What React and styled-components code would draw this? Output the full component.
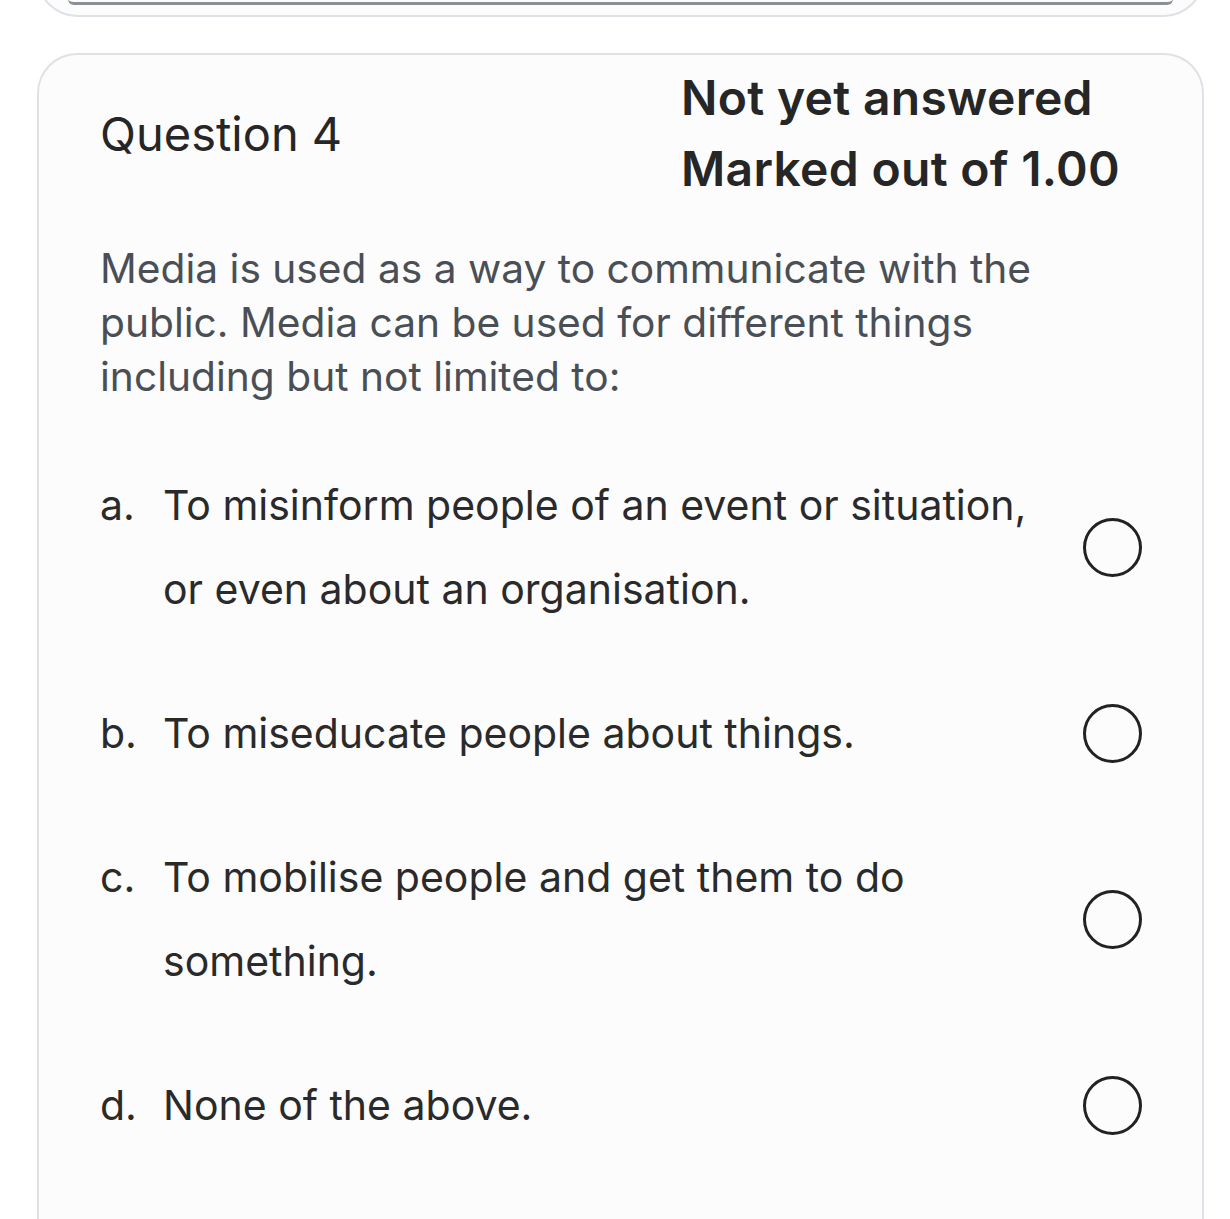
import React from "react";
import styled, { createGlobalStyle } from "styled-components";

const GlobalStyle = createGlobalStyle`
  html, body {
    margin: 0;
    padding: 0;
    background: #ffffff;
    font-family: Inter, "Noto Sans", "Liberation Sans", sans-serif;
    -webkit-font-smoothing: antialiased;
  }
  body {
    overflow: hidden;
  }
`;

const Page = styled.div`
  display: flex;
  flex-direction: column;
  gap: 36px;
  padding: 0 26px 0 37px;
  height: 1219px;
  overflow: hidden;
`;

const PrevCard = styled.div`
  margin-top: -59px;
  height: 74px;
  border: 2px solid #dee2e6;
  border-top: none;
  border-radius: 0 0 40px 40px;
  background: #fcfcfc;
  padding: 0 29px;
`;

const PrevBar = styled.div`
  height: 61px;
  border-bottom: 3px solid #8b8e94;
  border-radius: 0 0 6px 6px;
`;

const Card = styled.section`
  flex: 1;
  border: 2px solid #dee2e6;
  border-bottom: none;
  border-radius: 40px 40px 0 0;
  background: #fcfcfc;
  padding: 7px 60px 0 61px;
  color: #222222;
`;

const Header = styled.div`
  display: flex;
  align-items: center;
  justify-content: space-between;
`;

const QuestionTitle = styled.h2`
  margin: 0;
  font-size: 47px;
  font-weight: 400;
  color: #262626;
`;

const Info = styled.div`
  margin-right: 17px;
  width: 444px;
`;

const InfoLine = styled.div`
  font-size: 48px;
  font-weight: 600;
  line-height: 71px;
  letter-spacing: 0.3px;
  color: #262626;
  white-space: nowrap;
`;

const Prompt = styled.p`
  margin: 38px 0 0;
  font-size: 40.7px;
  line-height: 54px;
  color: #4a4f56;
  max-width: 960px;
`;

const Options = styled.div`
  display: flex;
  flex-direction: column;
  gap: 60px;
  margin-top: 59px;
`;

const Option = styled.label`
  display: flex;
  align-items: center;
`;

const Letter = styled.span`
  width: 63px;
  flex-shrink: 0;
  font-size: 41px;
  line-height: 84px;
  color: #2a2a2a;
  align-self: flex-start;
`;

const OptionText = styled.span`
  flex: 1;
  font-size: 41px;
  line-height: 84px;
  color: #2a2a2a;
  max-width: 880px;
`;

const Radio = styled.span`
  width: 53px;
  height: 53px;
  flex-shrink: 0;
  border: 3px solid #222;
  border-radius: 50%;
  margin-left: auto;
`;

const options = [
  { letter: "a.", text: "To misinform people of an event or situation, or even about an organisation." },
  { letter: "b.", text: "To miseducate people about things." },
  { letter: "c.", text: "To mobilise people and get them to do something." },
  { letter: "d.", text: "None of the above." },
];

export default function App() {
  return (
    <>
      <GlobalStyle />
      <Page>
        <PrevCard>
          <PrevBar />
        </PrevCard>
        <Card>
          <Header>
            <QuestionTitle>Question 4</QuestionTitle>
            <Info>
              <InfoLine>Not yet answered</InfoLine>
              <InfoLine>Marked out of 1.00</InfoLine>
            </Info>
          </Header>
          <Prompt>
            Media is used as a way to communicate with the public. Media can be
            used for different things including but not limited to:
          </Prompt>
          <Options>
            {options.map((o) => (
              <Option key={o.letter}>
                <Letter>{o.letter}</Letter>
                <OptionText>{o.text}</OptionText>
                <Radio />
              </Option>
            ))}
          </Options>
        </Card>
      </Page>
    </>
  );
}
